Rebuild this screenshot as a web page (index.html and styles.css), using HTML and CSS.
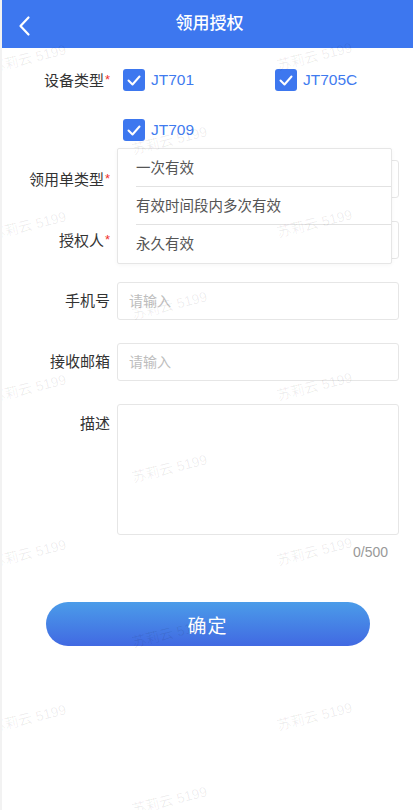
FILE: index.html
```html
<!DOCTYPE html>
<html lang="zh-CN">
<head>
  <meta charset="UTF-8" />
  <meta name="viewport" content="width=device-width, initial-scale=1.0"/>
  <title>领用授权</title>
  <link rel="stylesheet" href="styles.css">
</head>
<body>

  <div class="page">

    <div class="nav">
      <span class="nav-back">
        <svg width="14" height="22" viewBox="0 0 14 22">
          <polyline points="10.5,2.5 2.5,11 10.5,19.5" fill="none" stroke="#fff" stroke-width="2.2" stroke-linecap="round" stroke-linejoin="round"/>
        </svg>
      </span>
      <div class="nav-title">领用授权</div>
    </div>

    <form class="form">

      <div class="row row-check">
        <div class="label">设备类型<i>*</i></div>
        <div class="checks">
          <label class="check"><span class="box"><svg width="22" height="22" viewBox="0 0 22 22"><polyline points="5.5,11.5 9.5,15.5 16.5,7.5" fill="none" stroke="#fff" stroke-width="2" stroke-linecap="round" stroke-linejoin="round"/></svg></span>JT701</label>
          <label class="check"><span class="box"><svg width="22" height="22" viewBox="0 0 22 22"><polyline points="5.5,11.5 9.5,15.5 16.5,7.5" fill="none" stroke="#fff" stroke-width="2" stroke-linecap="round" stroke-linejoin="round"/></svg></span>JT705C</label>
          <label class="check"><span class="box"><svg width="22" height="22" viewBox="0 0 22 22"><polyline points="5.5,11.5 9.5,15.5 16.5,7.5" fill="none" stroke="#fff" stroke-width="2" stroke-linecap="round" stroke-linejoin="round"/></svg></span>JT709</label>
        </div>
      </div>

      <div class="row">
        <div class="label">领用单类型<i>*</i></div>
        <div class="field">
          <div class="input"></div>
          <ul class="dropdown">
            <li>一次有效</li>
            <li>有效时间段内多次有效</li>
            <li>永久有效</li>
          </ul>
        </div>
      </div>

      <div class="row">
        <div class="label">授权人<i>*</i></div>
        <div class="field"><div class="input"></div></div>
      </div>

      <div class="row">
        <div class="label">手机号</div>
        <div class="field"><input class="input" type="text" placeholder="请输入"></div>
      </div>

      <div class="row">
        <div class="label">接收邮箱</div>
        <div class="field"><input class="input" type="text" placeholder="请输入"></div>
      </div>

      <div class="row row-top">
        <div class="label">描述</div>
        <div class="field"><textarea class="input textarea"></textarea></div>
      </div>

      <div class="count">0/500</div>

      <button type="button" class="submit">确定</button>
    </form>

    <div class="watermarks">
      <span style="left:-12px;top:50px">苏莉云 5199</span>
      <span style="left:274px;top:48px">苏莉云 5199</span>
      <span style="left:129px;top:132px">苏莉云 5199</span>
      <span style="left:-12px;top:217px">苏莉云 5199</span>
      <span style="left:274px;top:215px">苏莉云 5199</span>
      <span style="left:129px;top:297px">苏莉云 5199</span>
      <span style="left:-12px;top:380px">苏莉云 5199</span>
      <span style="left:274px;top:378px">苏莉云 5199</span>
      <span style="left:129px;top:460px">苏莉云 5199</span>
      <span style="left:-12px;top:545px">苏莉云 5199</span>
      <span style="left:274px;top:543px">苏莉云 5199</span>
      <span style="left:129px;top:625px">苏莉云 5199</span>
      <span style="left:-12px;top:710px">苏莉云 5199</span>
      <span style="left:274px;top:708px">苏莉云 5199</span>
      <span style="left:129px;top:792px">苏莉云 5199</span>
    </div>
  </div>

</body>
</html>
```

FILE: styles.css
```css
:root {
  --blue: #3d77ef;
  --text: #333;
  --line: #e6e6e6;
}

* {
  box-sizing: border-box;
}

body {
  margin: 0;
  background: #f2f2f2;
  font-family: "Liberation Sans", "Noto Sans CJK SC", sans-serif;
  color: var(--text);
}

.page {
  position: relative;
  margin-left: 2px;
  min-height: 810px;
  background: #fff;
  overflow: hidden;
}

.nav {
  height: 48px;
  background: var(--blue);
  display: flex;
  align-items: center;
  justify-content: center;
  position: relative;
}

.nav-back {
  position: absolute;
  left: 16px;
  top: 15px;
  display: flex;
}

.nav-title {
  color: #fff;
  font-size: 17px;
  font-weight: 500;
  line-height: 22px;
  margin-left: 4px;
}

.form {
  display: flex;
  flex-direction: column;
  gap: 23px;
  padding: 21px 14px 0 0;
}

.row {
  display: flex;
  align-items: center;
}

.row-check {
  align-items: flex-start;
  margin-bottom: -4px;
}

.row-top {
  align-items: flex-start;
}

.label {
  width: 108px;
  margin-right: 7px;
  text-align: right;
  font-size: 15px;
  line-height: 22px;
  white-space: nowrap;
}

.label i {
  font-style: normal;
  color: #f0302c;
  font-size: 13px;
  vertical-align: 2px;
  margin-left: 1px;
}

.row-top .label {
  padding-top: 9px;
}

.checks {
  flex: 1;
  display: grid;
  grid-template-columns: 152px 1fr;
  row-gap: 28px;
  padding-left: 6px;
}

.check {
  display: flex;
  align-items: center;
  gap: 6px;
  color: #3f7bef;
  font-size: 15.5px;
  line-height: 22px;
}

.box {
  width: 22px;
  height: 22px;
  border-radius: 3px;
  background: var(--blue);
  display: flex;
}

.field {
  flex: 1;
  position: relative;
}

.input {
  display: block;
  width: 100%;
  height: 38px;
  border: 1px solid var(--line);
  border-radius: 3px;
  background: #fff;
  padding: 0 11px;
  font-family: inherit;
  font-size: 14px;
  color: var(--text);
  outline: none;
}

.input::placeholder {
  color: #bdbdbd;
}

.textarea {
  height: 131px;
  resize: none;
  padding: 10px 11px;
}

.dropdown {
  position: absolute;
  top: -12px;
  left: 0;
  width: 275px;
  margin: 0;
  padding: 0;
  list-style: none;
  background: #fff;
  border: 1px solid var(--line);
  border-radius: 2px;
  box-shadow: 0 1px 4px rgba(0, 0, 0, 0.04);
  z-index: 2;
}

.dropdown li {
  margin-left: 18px;
  height: 38px;
  line-height: 38px;
  font-size: 14.5px;
  color: #555;
  border-bottom: 1px solid #e2e2e2;
}

.dropdown li:last-child {
  border-bottom: none;
}

.count {
  margin-top: -16px;
  text-align: right;
  padding-right: 11px;
  font-size: 14px;
  line-height: 20px;
  color: #999;
}

.submit {
  align-self: center;
  width: 324px;
  height: 44px;
  margin: 17px 0 0 14px;
  border: none;
  border-radius: 22px;
  background: linear-gradient(#4b9ce9, #4169e2);
  color: #fff;
  font-family: inherit;
  font-size: 19px;
  letter-spacing: 1px;
  cursor: pointer;
}

.watermarks {
  position: absolute;
  inset: 0;
  pointer-events: none;
  z-index: 3;
}

.watermarks span {
  position: absolute;
  width: 80px;
  font-size: 14px;
  line-height: 16px;
  white-space: nowrap;
  color: rgba(0, 0, 0, 0.07);
  transform: rotate(-14deg);
}
```
